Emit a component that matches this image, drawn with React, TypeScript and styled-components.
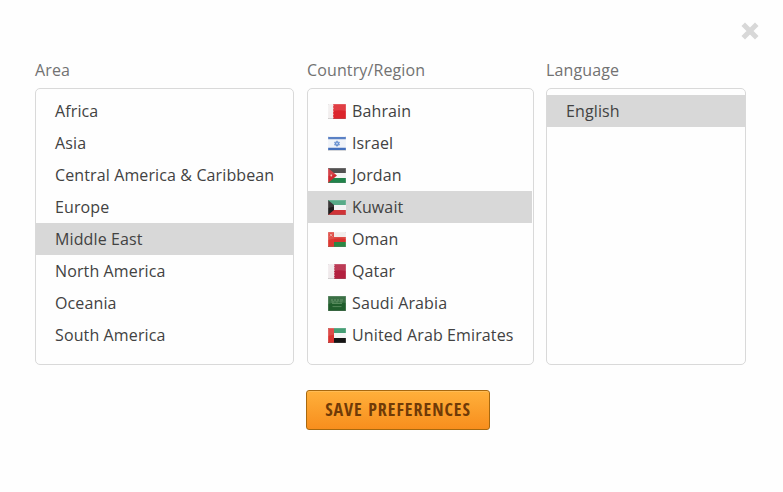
import React, { useState } from 'react';
import styled, { createGlobalStyle } from 'styled-components';

const GlobalStyle = createGlobalStyle`
  * { box-sizing: border-box; }
  body { margin: 0; background: #fefefe; }
`;

const Dialog = styled.main`
  width: 783px;
  height: 492px;
  overflow: hidden;
  background: #fefefe;
  font-family: "Open Sans", sans-serif;
  font-size: 16px;
  letter-spacing: 0.12px;
  color: #424242;
  display: flex;
  flex-direction: column;
`;

const Header = styled.header`
  display: flex;
  justify-content: flex-end;
  height: 59px;
  padding: 22px 24px 0 0;
`;

const CloseButton = styled.button`
  width: 18px;
  height: 18px;
  padding: 0;
  border: 0;
  background: none;
  svg { display: block; }
`;

const Columns = styled.div`
  display: grid;
  grid-template-columns: 259px 227px 200px;
  column-gap: 13px;
  padding-left: 35px;
`;

const Column = styled.section<{ $shift?: number }>`
  margin-left: ${p => p.$shift ?? 0}px;
  margin-right: ${p => -(p.$shift ?? 0)}px;
`;

const Label = styled.h2`
  margin: 0;
  height: 29px;
  font-size: 16px;
  font-weight: 400;
  line-height: 22px;
  color: #727272;
`;

const List = styled.ul`
  list-style: none;
  margin: 0;
  height: 277px;
  padding: 6px 0;
  border: 1px solid #d9d9d9;
  border-radius: 5px;
`;

const Option = styled.li<{ $selected: boolean; $trim: number }>`
  display: flex;
  align-items: center;
  gap: 6px;
  height: 32px;
  margin: 0 ${p => p.$trim}px 0 0;
  padding-left: 19px;
  white-space: nowrap;
  line-height: 32px;
  background: ${p => (p.$selected ? '#d8d8d8' : 'transparent')};
`;

const FlagIcon = styled.svg`
  flex: none;
  width: 18px;
  height: 15px;
  margin-left: 1px;
  border-radius: 1px;
  filter: drop-shadow(0 0 0.5px rgba(0, 0, 0, 0.35));
`;

const Footer = styled.footer`
  display: flex;
  padding: 25px 0 0 306px;
`;

const SaveButton = styled.button`
  width: 184px;
  height: 40px;
  padding: 0 0 2px;
  border: 1px solid #a8690f;
  border-radius: 3px;
  background: linear-gradient(#ffb03b, #f88e1d);
  box-shadow: inset 0 1px 0 #ffbc55;
  font-family: "Open Sans Condensed", "Open Sans", sans-serif;
  font-size: 18px;
  font-weight: 700;
  font-stretch: 75%;
  letter-spacing: 1px;
  line-height: 36px;
  white-space: nowrap;
  color: #6f3a07;
`;

const flags: Record<string, React.ReactNode> = {
  Bahrain: (
    <>
      <path d="M0 0h18v15H0z" fill="#f2eeee" />
      <path d="M5 0h13v15H5l.6-1.5L5 12l.6-1.5L5 9l.6-1.5L5 6l.6-1.5L5 3l.6-1.5z" fill="#dc242b" />
    </>
  ),
  Israel: (
    <>
      <path d="M0 0h18v15H0z" fill="#f0f3f9" />
      <path d="M0 1h18v2.3H0zM0 11.7h18V14H0z" fill="#4470bd" />
      <path d="M9 4.8l2.5 4.2h-5zM9 10.4L6.5 6.2h5z" fill="#b9cdea" stroke="#5a86cc" strokeWidth=".8" />
    </>
  ),
  Jordan: (
    <>
      <path d="M0 0h18v5H0z" fill="#3b3939" />
      <path d="M0 5h18v5H0z" fill="#f4f4f4" />
      <path d="M0 10h18v5H0z" fill="#21834b" />
      <path d="M0 0l9 7.5L0 15z" fill="#cf2a31" />
      <circle cx="3.3" cy="7.5" r=".9" fill="#f2c4c4" />
    </>
  ),
  Kuwait: (
    <>
      <path d="M0 0h18v5H0z" fill="#41a078" />
      <path d="M0 5h18v5H0z" fill="#f4f4f4" />
      <path d="M0 10h18v5H0z" fill="#cf3337" />
      <path d="M0 0l6 5v5L0 15z" fill="#201e1e" />
    </>
  ),
  Oman: (
    <>
      <path d="M0 0h18v5H0z" fill="#efebe9" />
      <path d="M0 5h18v5H0z" fill="#d9332d" />
      <path d="M0 10h18v5H0z" fill="#2d8744" />
      <path d="M0 0h6v15H0z" fill="#dc3932" />
      <path d="M1.8 1.8l2.6 2.6m0-2.6L1.8 4.4" stroke="#eda198" strokeWidth=".9" />
    </>
  ),
  Qatar: (
    <>
      <path d="M0 0h18v15H0z" fill="#efe9eb" />
      <path d="M6 0h12v15H6l.7-1.2-.7-1.3.7-1.2L6 10l.7-1.2L6 7.5l.7-1.2L6 5l.7-1.2L6 2.5l.7-1.2z" fill="#b3203f" />
    </>
  ),
  'Saudi Arabia': (
    <>
      <path d="M0 0h18v15H0z" fill="#205d2c" />
      <path d="M3 4h2m1 0h2m1 0h2m1 0h3M3.5 6h3m1 0h3m1 0h3M4 7.5h10" stroke="#568a5b" strokeWidth="1" />
      <path d="M4.5 10.6h9" stroke="#6c996d" strokeWidth=".7" />
    </>
  ),
  'United Arab Emirates': (
    <>
      <path d="M0 0h18v5H0z" fill="#2c9162" />
      <path d="M0 5h18v5H0z" fill="#f4f4f4" />
      <path d="M0 10h18v5H0z" fill="#151414" />
      <path d="M0 0h6v15H0z" fill="#d93431" />
    </>
  ),
};

function Flag({ country }: { country: string }) {
  return (
    <FlagIcon viewBox="0 0 18 15" aria-hidden="true">
      {flags[country]}
      <path d="M0 0h18v7Q9 5 0 8z" fill="#fff" opacity=".12" />
      <path d="M.5.5h17v14H.5z" fill="none" stroke="#fff" opacity=".14" />
      <path d="M0 14.5h18" stroke="#000" opacity=".12" />
    </FlagIcon>
  );
}

interface PickerProps {
  label: string;
  options: string[];
  initial: string;
  withFlags?: boolean;
  shift?: number;
  trim?: number;
}

function Picker({ label, options, initial, withFlags, shift, trim = 0 }: PickerProps) {
  const [selected, setSelected] = useState(initial);
  return (
    <Column $shift={shift}>
      <Label>{label}</Label>
      <List role="listbox" aria-label={label}>
        {options.map(name => (
          <Option
            key={name}
            role="option"
            aria-selected={name === selected}
            $selected={name === selected}
            $trim={trim}
            onClick={() => setSelected(name)}
          >
            {withFlags && <Flag country={name} />}
            {name}
          </Option>
        ))}
      </List>
    </Column>
  );
}

const areas = [
  'Africa', 'Asia', 'Central America & Caribbean', 'Europe',
  'Middle East', 'North America', 'Oceania', 'South America',
];

export default function App() {
  return (
    <>
      <GlobalStyle />
      <Dialog>
        <Header>
          <CloseButton aria-label="Close">
            <svg width="18" height="18" viewBox="0 0 18 18">
              <path d="M4 4l10 10M14 4L4 14" stroke="#d8d8d8" strokeWidth="5" strokeLinecap="square" strokeLinejoin="round" />
            </svg>
          </CloseButton>
        </Header>
        <Columns>
          <Picker label="Area" options={areas} initial="Middle East" />
          <Picker label="Country/Region" options={Object.keys(flags)} initial="Kuwait" withFlags trim={1} />
          <Picker label="Language" options={['English']} initial="English" shift={-1} />
        </Columns>
        <Footer>
          <SaveButton>SAVE PREFERENCES</SaveButton>
        </Footer>
      </Dialog>
    </>
  );
}
